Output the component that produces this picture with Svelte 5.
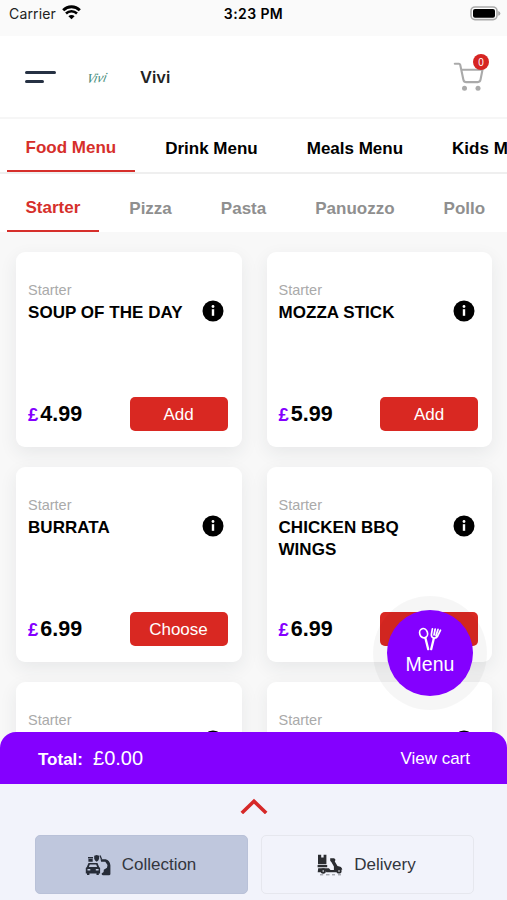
<script>
  let menus = ['Food Menu', 'Drink Menu', 'Meals Menu', 'Kids Menu'];
  let categories = ['Starter', 'Pizza', 'Pasta', 'Panuozzo', 'Pollo'];
  let activeMenu = 'Food Menu';
  let activeCategory = 'Starter';
  let orderType = 'collection';

  let items = [
    { name: 'SOUP OF THE DAY', price: '4.99', action: 'Add' },
    { name: 'MOZZA STICK', price: '5.99', action: 'Add' },
    { name: 'BURRATA', price: '6.99', action: 'Choose' },
    { name: 'CHICKEN BBQ WINGS', price: '6.99', action: '' },
    { name: '' },
    { name: '' }
  ];
</script>

<div class="app">
  <div class="status">
    <div class="carrier">
      <span>Carrier</span>
      <svg width="19" height="15" viewBox="0 0 19 15">
        <path d="M1.2 5.2a11.8 11.8 0 0 1 16.6 0" fill="none" stroke="#000" stroke-width="2.9" />
        <path d="M4 8.5a7.8 7.8 0 0 1 11 0" fill="none" stroke="#000" stroke-width="2.5" />
        <path d="M6.4 11.2a4.4 4.4 0 0 1 6.2 0L9.5 14.3z" />
      </svg>
    </div>
    <div class="time">3:23 PM</div>
    <svg class="battery" width="31" height="15" viewBox="0 0 31 15">
      <rect x="1" y="1" width="26" height="12.6" rx="4" fill="#fff" stroke="#aaa" stroke-width="1.6" />
      <rect x="3" y="3" width="22" height="8.7" rx="2" />
      <path d="M28.2 5v4.8q2.2-.8 2.2-2.4t-2.2-2.4z" fill="#aaa" />
    </svg>
  </div>

  <header>
    <button class="burger" aria-label="Open navigation"><i></i><i></i></button>
    <span class="logo">Vivi</span>
    <h1>Vivi</h1>
    <button class="cart" aria-label="Cart">
      <svg width="31" height="30" viewBox="0 0 31 30" fill="none" stroke="#aaa" stroke-width="2.1" stroke-linecap="round" stroke-linejoin="round">
        <path d="M1.8 1.7h4.1q1 0 1.3 1l3.2 15q.5 2.4 2.9 2.4h11.5q2.4 0 2.7-2.4l2-10H8.5" />
        <circle cx="11.5" cy="26.3" r="2.5" fill="#aaa" stroke="none" />
        <circle cx="25" cy="26.3" r="2.5" fill="#aaa" stroke="none" />
      </svg>
      <span class="badge">0</span>
    </button>
  </header>

  <nav class="tabs menus">
    {#each menus as menu}
      <button class:active={menu === activeMenu} on:click={() => (activeMenu = menu)}>{menu}</button>
    {/each}
  </nav>
  <nav class="tabs categories">
    {#each categories as category}
      <button class:active={category === activeCategory} on:click={() => (activeCategory = category)}>{category}</button>
    {/each}
  </nav>

  <main>
    {#each items as item}
      <article>
        <div class="kind">{activeCategory}</div>
        <div class="title">
          <h2>{item.name}</h2>
          <svg width="22" height="22" viewBox="0 0 22 22">
            <circle cx="11" cy="11" r="10.5" />
            <path d="M9.8 9.2h2.4v6.6H9.8z" fill="#fff" />
            <circle cx="11" cy="6.5" r="1.4" fill="#fff" />
          </svg>
        </div>
        {#if item.price}
          <div class="buy">
            <div class="price"><span>£</span>{item.price}</div>
            <button>{item.action}</button>
          </div>
        {/if}
      </article>
    {/each}
  </main>

  <footer>
    <button class="fab">
      <svg width="24" height="24" viewBox="0 0 24 24" fill="none" stroke="#fff" stroke-width="1.7" stroke-linecap="round" stroke-linejoin="round">
        <ellipse cx="5.6" cy="6.2" rx="3.9" ry="4.7" transform="rotate(-18 5.6 6.2)" />
        <path d="M7.4 11l2.8 11.2" stroke-width="2.3" />
        <path d="M14.4 1.8l-1 5.6q-.3 2.8 2 3.6 2.8.6 4.2-1.8l2.9-6M17.2 2l-1.2 6M20 2.4l-2 6.2" />
        <path d="M15.8 11.5L13.2 22.2" stroke-width="2.3" />
      </svg>
      <span>Menu</span>
    </button>

    <div class="total">
      <b>Total:</b>
      <span>£0.00</span>
      <button>View cart</button>
    </div>

    <div class="sheet">
      <svg class="chevron" width="28" height="16" viewBox="0 0 28 16" fill="none" stroke="#d62828" stroke-width="3.6">
        <path d="M1.8 15L14 3.2 26.2 15" />
      </svg>
      <div class="types">
        <button class:selected={orderType === 'collection'} on:click={() => (orderType = 'collection')}>
          <svg width="26" height="22" viewBox="0 0 26 22" fill="#262c38">
            <path d="M3 3h5v1.4H3zM3.4 5h4.3v2.8H3.4zM9.2 1.8l2.5-.8 2.4.8v3q-.4 2-2.4 3-2-1-2.5-3z" />
            <path d="M3.5 9h9l1.6 4 1 1v5.4h-1.3V21h-2.3v-1.6H4.4V21H2v-1.6H.8V14l1-1zM4.8 10.6l-.9 2.4h8.2l-.9-2.4zM2.5 15v1.6h2.8V15zM10.8 15v1.6h2.8V15z" fill-rule="evenodd" />
            <path d="M15 1.6l1.6 4" fill="none" stroke="#262c38" stroke-width="1.3" />
            <path d="M15.6 5.2h5q4.2 1 4.8 6V20q0 1.2-1.5 1.2h-6q-1.3-.2-1.3-1.7l2-1.5.2-2.2 3.2-2 .5-2.8-2.2-3.2h-4.2z" />
          </svg>
          <span>Collection</span>
        </button>
        <button class:selected={orderType === 'delivery'} on:click={() => (orderType = 'delivery')}>
          <svg width="26" height="22" viewBox="0 0 26 22" fill="#2b2c31">
            <path d="M1 .8h3.2v2.6h2.4V.8h2.8v9.4H1zM.6 11h9.6v2.2H.6z" />
            <path d="M1.2 14.2h10.7l1.6 1.8h3.4v-3.6l-2.4-4.2-1.3-1.4V4.2h4l1.3 1.6-.7 1.7 2.7 4.5q4.4.4 4.8 3.7H22.5l-2.8 2.5H9.4q-.5-2-3-2-2.3 0-2.8 2H.7z" />
            <circle cx="6.2" cy="17" r="2.7" />
            <circle cx="22" cy="17" r="2.6" />
            <circle cx="6.2" cy="17" r=".8" fill="#f2f3fb" />
            <circle cx="22" cy="17" r=".8" fill="#f2f3fb" />
            <path d="M3 20.8h3.2M9 20.8h3.5M15 20.8h3M21 20.8h3" stroke="#8b8c94" stroke-width="1" />
          </svg>
          <span>Delivery</span>
        </button>
      </div>
    </div>
  </footer>
</div>

<style>
:global(body) {
  margin: 0;
  background: #f8f8f8;
}
* {
  box-sizing: border-box;
}
button {
  font: inherit;
  color: inherit;
  background: none;
  border: 0;
  padding: 0;
  cursor: pointer;
}
.app {
  display: flex;
  flex-direction: column;
  width: 507px;
  height: 900px;
  overflow: hidden;
  background: #f8f8f8;
  color: #000;
  font-family: "Liberation Sans", Arial, sans-serif;
  font-size: 17px;
}

.status {
  flex: none;
  display: grid;
  grid-template-columns: 1fr auto 1fr;
  align-items: start;
  height: 36px;
  padding: 5px 6px 0 9px;
  background: #fafafa;
  font-family: Inter, sans-serif;
  font-size: 14px;
  line-height: 18px;
}
.carrier {
  display: flex;
  gap: 6px;
  color: #222;
}
.carrier span {
  letter-spacing: 0.15px;
}
.time {
  margin-left: -3px;
  font-weight: 600;
  letter-spacing: 0.4px;
}
.battery {
  justify-self: end;
  margin-top: 1px;
}

header {
  flex: none;
  display: flex;
  align-items: center;
  height: 83px;
  padding: 0 23px 0 25px;
  background: #fff;
  border-bottom: 2px solid #f6f6f6;
}
.burger {
  display: flex;
  flex-direction: column;
  gap: 6px;
  width: 62px;
}
.burger i {
  width: 31px;
  height: 3px;
  border-radius: 2px;
  background: #263143;
}
.burger i + i {
  width: 19px;
}
.logo {
  width: 53px;
  color: #3f8a78;
  font-family: "Liberation Serif", serif;
  font-size: 13px;
  font-style: italic;
  transform: rotate(-4deg) skewX(-18deg);
}
h1 {
  flex: 1;
  margin: 0;
  color: #222;
  font-family: Inter, sans-serif;
  font-size: 16.5px;
  font-weight: 600;
}
.cart {
  position: relative;
  height: 30px;
}
.cart svg {
  display: block;
}
.badge {
  position: absolute;
  top: -8px;
  right: -5px;
  width: 16px;
  height: 16px;
  border-radius: 50%;
  background: #d62422;
  color: #fff;
  font-size: 10px;
  line-height: 17px;
  text-align: center;
}

.tabs {
  flex: none;
  display: flex;
  gap: 12px;
  padding-left: 7px;
  background: #fff;
  font-weight: bold;
  letter-spacing: 0.03px;
  overflow: hidden;
}
.tabs button {
  flex: none;
  padding: 3px 18.5px 0;
  border-bottom: 2px solid transparent;
}
.tabs .active {
  padding-top: 1px;
  color: #d62f2b;
  border-color: #d62f2b;
}
.menus {
  height: 55px;
  box-shadow: inset 0 -2px #efefef;
  padding-bottom: 2px;
}
.menus button {
  padding-top: 9px;
}
.menus .active {
  padding-top: 7px;
}
.categories {
  height: 58px;
  padding-top: 10px;
}
.categories button {
  color: #8f8f8f;
}
.categories .active {
  padding-top: 2px;
  color: #d62f2b;
}

main {
  flex: 1;
  min-height: 0;
  display: grid;
  grid-template-columns: 225.5px 225.5px;
  grid-auto-rows: 195px;
  gap: 20.2px 25px;
  padding: 20px 16px 0;
  overflow: hidden;
}
article {
  display: flex;
  flex-direction: column;
  padding: 29px 14px 16px 12px;
  border-radius: 9px;
  background: #fff;
  box-shadow: 0 6px 18px rgba(40, 50, 60, 0.08);
}
.kind {
  color: #aaa;
  font-size: 14.5px;
  line-height: 18px;
}
.title {
  display: flex;
  justify-content: space-between;
  align-items: flex-start;
  padding-right: 3.5px;
}
.title svg {
  flex: none;
  margin-top: 1px;
}
h2 {
  max-width: 160px;
  margin: 2.5px 0 0;
  font-size: 17px;
  line-height: 22px;
  letter-spacing: 0.04px;
}
.buy {
  display: flex;
  justify-content: space-between;
  align-items: center;
  margin-top: auto;
}
.price {
  font-size: 21.5px;
  font-weight: bold;
}
.price span {
  margin-right: 2px;
  color: #8400ff;
  font-size: 18.5px;
}
.buy button {
  width: 98px;
  height: 34px;
  padding-top: 1px;
  border-radius: 5px;
  background: #d92822;
  color: #fff;
}

footer {
  position: relative;
  flex: none;
  margin-top: -16px;
}
.total {
  display: flex;
  align-items: center;
  height: 52px;
  padding: 0 37px 0 38px;
  border-radius: 16px 16px 0 0;
  background: #8400ff;
  color: #fff;
}
.total b {
  margin-top: 3px;
}
.total span {
  flex: 1;
  margin: 1px 0 0 10px;
  font-size: 20px;
}
.total button {
  margin-top: 1px;
}
.fab {
  position: absolute;
  top: -122px;
  right: 34px;
  display: flex;
  flex-direction: column;
  align-items: center;
  width: 86px;
  height: 86px;
  padding-top: 17px;
  border-radius: 50%;
  background: #8400ff;
  box-shadow: 0 0 0 14px rgba(0, 0, 0, 0.035);
  color: #fff;
  font-size: 19.5px;
  line-height: 27px;
}
.fab svg {
  flex: none;
}
.sheet {
  height: 116px;
  padding: 14px 33px 0 35px;
  background: #f2f3fb;
}
.chevron {
  display: block;
  margin: 0 auto 21px;
  position: relative;
  left: -1px;
}
.types {
  display: grid;
  grid-template-columns: 1fr 1fr;
  gap: 13px;
}
.types button {
  display: flex;
  justify-content: center;
  align-items: center;
  gap: 11px;
  height: 59px;
  padding: 1px 2px 0 0;
  border: 1px solid #e6e7ee;
  border-radius: 5px;
  color: #33363d;
}
.types .selected {
  border-color: #b9c1d8;
  background: #bfc7dd;
}
</style>
